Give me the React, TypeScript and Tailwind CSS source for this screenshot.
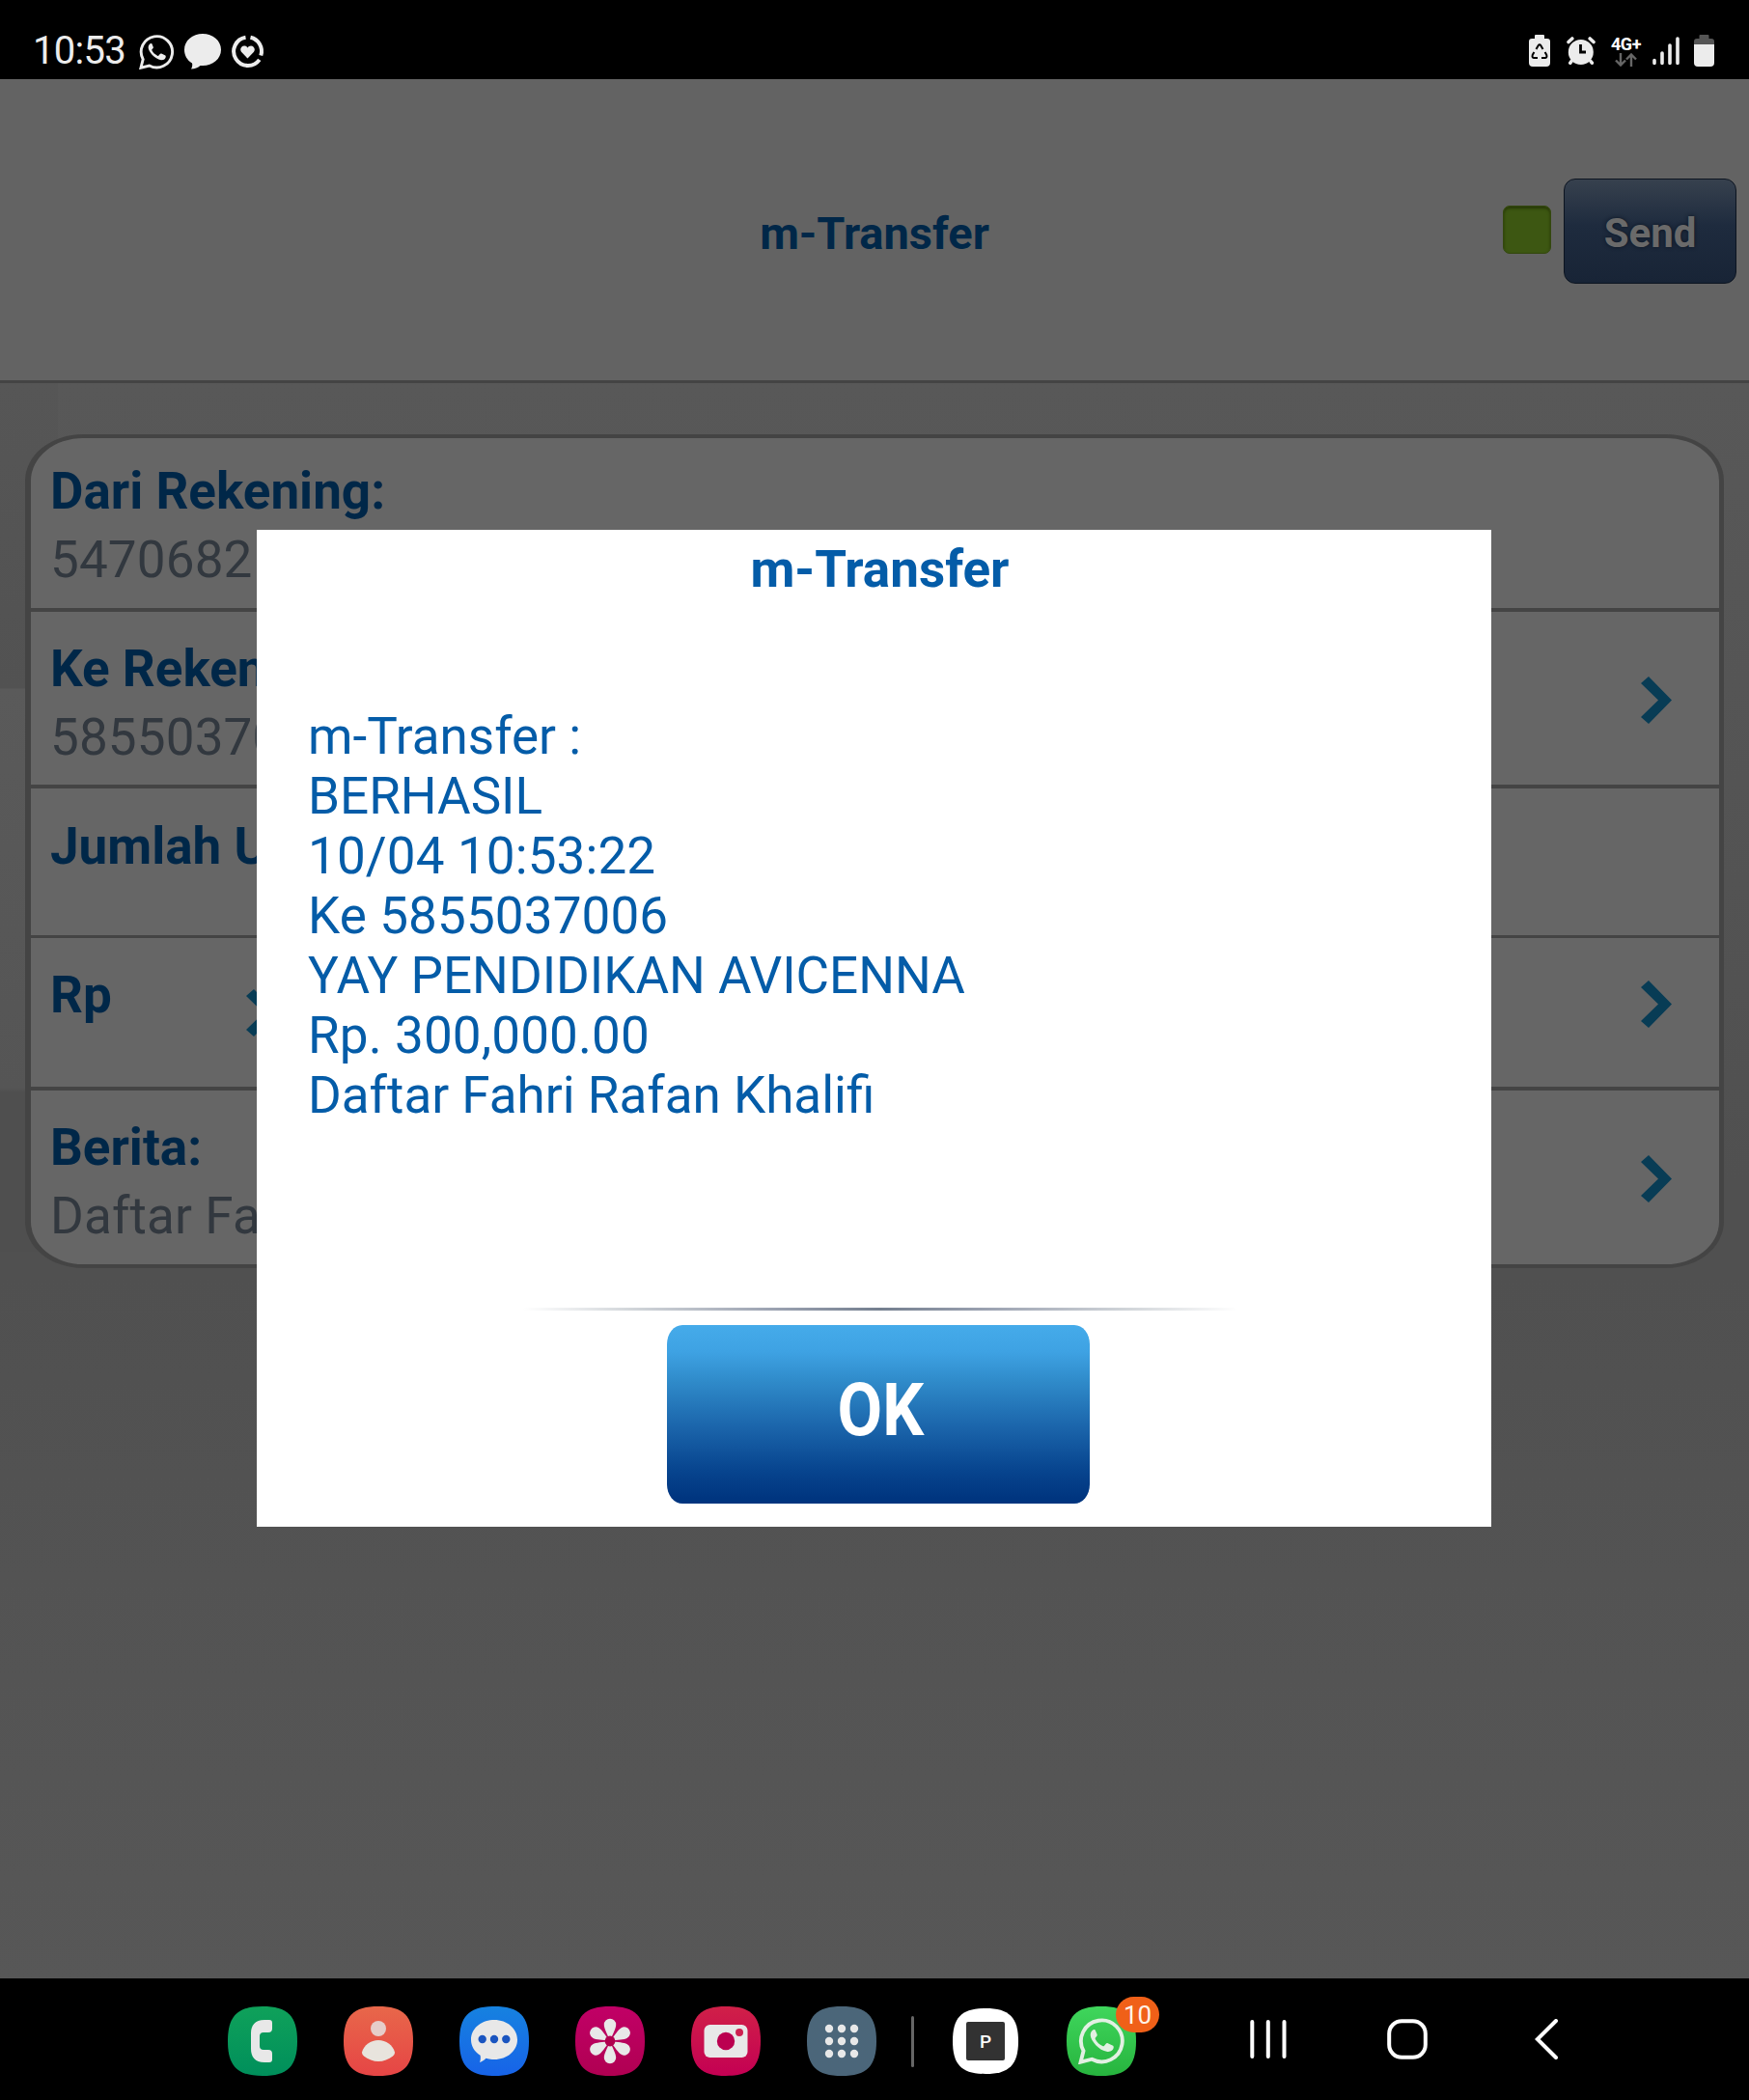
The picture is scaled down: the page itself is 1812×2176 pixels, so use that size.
import React from "react";

const SQUIRCLE = "M36 0C62 0 72 10 72 36C72 62 62 72 36 72C10 72 0 62 0 36C0 10 10 0 36 0Z";

function WhatsApp({ className, stroke }: { className: string; stroke: string }) {
  return (
    <svg className={className} viewBox="0 0 38 38" fill="none">
      <path
        d="M2 36.2L4.3 27.2A16.6 16.6 0 1 1 11 33.9Z"
        stroke={stroke}
        strokeWidth="3"
        strokeLinejoin="miter"
      />
      <path
        d="M13.2 10.2c-1.2-.3-3.6 1.6-3.3 4.8.4 4 6.6 12.2 13.6 12.9 3 .3 5-1.800 5-3.600 0-.8-.2-1-.9-1.400l-3.700-1.800c-.7-.3-1.100-.2-1.600.4l-1.300 1.600c-.4.5-.8.5-1.400.2-2.500-1.200-4.500-3-5.800-5.500-.3-.5-.2-.9.2-1.300l1-1.200c.3-.4.4-.8.2-1.300l-1.500-3.600c-.1-.2-.3-.2-.5-.2Z"
        fill={stroke}
      />
    </svg>
  );
}

function StatusBar() {
  return (
    <div className="flex h-[82px] shrink-0 items-start justify-between bg-black pl-[34px] pr-[36px] text-[#ececec]">
      <div className="flex pt-[29px]">
        <span className="w-[110px] text-[40px] leading-[47px] tracking-[-0.7px]">10:53</span>
        <WhatsApp className="mt-[6px] h-[37px] w-[37px]" stroke="#ececec" />
        <svg className="ml-[10px] mt-[6px] h-[37px] w-[38px]" viewBox="0 0 38 37" fill="#ececec">
          <path d="M19 0C29.500 0 38 7 38 16.500S29.500 33 19 33h-2.500c-2.500 2-5.500 3.600-9.500 3.600C8.200 34.500 8.600 32 8 30.500 3 27.500 0 22.500 0 16.500 0 7 8.500 0 19 0Z" />
        </svg>
        <svg className="ml-[10px] mt-[6px] h-[36px] w-[36px]" viewBox="0 0 36 36" fill="none" stroke="#ececec" strokeWidth="4">
          <path d="M15.500 3.700A14.700 14.700 0 1 0 29.800 26.800" />
          <path d="M20.500 3.700A14.700 14.700 0 0 1 31.300 22.500" />
          <path
            d="M17.500 25.500L11 18.800C9 16 11 12.400 14 12.400c1.600 0 2.800.8 3.500 2 .7-1.200 1.900-2 3.500-2 3 0 5 3.600 3 6.400Z"
            fill="#ececec"
            stroke="none"
          />
        </svg>
      </div>
      <div className="flex pt-[36px]">
        <svg className="h-[33px] w-[22px]" viewBox="0 0 22 33">
          <path d="M7 0h8a1 1 0 0 1 1 1v3h3a3 3 0 0 1 3 3v22a4 4 0 0 1-4 4H4a4 4 0 0 1-4-4V7a3 3 0 0 1 3-3h3V1a1 1 0 0 1 1-1Z" fill="#ececec" />
          <path d="M7.500 15L9.600 11.200q1.400-2 2.800 0L14.500 15M16.600 18l1.700 3q.8 2.800-1.800 3H13M9 24H5.500q-2.600-.2-1.800-3l1.700-3" fill="none" stroke="#000" strokeWidth="2" />
        </svg>
        <svg className="ml-[17px] mt-[1px] h-[31px] w-[30px]" viewBox="0 0 30 31" fill="none" stroke="#ececec" strokeWidth="3.600" strokeLinecap="round">
          <circle cx="14.800" cy="17" r="13" fill="#ececec" stroke="none" />
          <path d="M2 6.500L5.800 3M28 6.500L24.200 3M5 26.500L3.800 28.200M25 26.500l1.300 1.700" />
          <path d="M14.500 9v8H20" stroke="#000" strokeWidth="2.800" strokeLinecap="butt" />
        </svg>
        <div className="ml-[15px] flex w-[33px] flex-col items-center">
          <span className="text-[18px] font-bold leading-[19px] tracking-[-0.5px] text-white">4G+</span>
          <svg className="h-[14px] w-[23px]" viewBox="0 0 23 14" fill="none" stroke="#666" strokeWidth="2.400">
            <path d="M6 0v12M1 7.500L6 12.500 11 7.500M17 14V1.500M12 6.500L17 1.500 22 6.500" />
          </svg>
        </div>
        <svg className="ml-[11px] mt-[2px] h-[30px] w-[28px]" viewBox="0 0 28 30" stroke="#ececec" strokeWidth="3.600" strokeLinecap="round">
          <path d="M2 24.500v3M10 17v10.500M18 9v18.500M26 2v25.500" />
        </svg>
        <svg className="ml-[15px] h-[33px] w-[21px]" viewBox="0 0 21 33">
          <path d="M6.500 0h8a1 1 0 0 1 1 1v3H18a3 3 0 0 1 3 3v3H0V7a3 3 0 0 1 3-3h2.500V1a1 1 0 0 1 1-1Z" fill="#555" />
          <path d="M0 10h21v19a4 4 0 0 1-4 4H4a4 4 0 0 1-4-4Z" fill="#ececec" />
        </svg>
      </div>
    </div>
  );
}

function Header() {
  return (
    <div className="grid h-[315px] shrink-0 grid-cols-[1fr_auto_1fr] border-b-[3px] border-[#444] bg-[#636363]">
      <div />
      <h1 className="pt-[132px] text-[47px] font-bold leading-[56px] text-[#002748]">m-Transfer</h1>
      <div className="flex justify-end pr-[13px]">
        <div className="mr-[13px] mt-[131px] h-[50px] w-[50px] rounded-[7px] border border-[#34480f] bg-[#3d5712] shadow-[inset_0_2px_3px_#263707]" />
        <button className="mt-[103px] flex h-[109px] w-[179px] items-center justify-center rounded-[12px] border border-[#0c1420] bg-linear-to-b from-[#37414e] via-[#1e2b3e] via-45% to-[#182436] pt-[4px] text-[42px] font-bold text-[#6a6a6a] [text-shadow:0_0_4px_#0c1420]">
          Send
        </button>
      </div>
    </div>
  );
}

function Chevron({ className }: { className: string }) {
  return (
    <svg className={className} viewBox="0 0 32 49" fill="#083c55">
      <path d="M8 0L32 24.500 8 49 0 42 18 24.500 0 7Z" />
    </svg>
  );
}

function Row({ label, value, className, chevron }: { label: string; value?: string; className: string; chevron?: string }) {
  return (
    <div className={"flex items-start justify-between overflow-hidden pl-[20px] pr-[49px] text-[53px] leading-[70px] " + className}>
      <div className="flex flex-col">
        <span className="font-bold text-[#002748]">{label}</span>
        {value && <span className="pt-px tracking-[0.15px] text-[#32383f]">{value}</span>}
      </div>
      {chevron && <Chevron className={"h-[49px] w-[32px] " + chevron} />}
    </div>
  );
}

function Form() {
  return (
    <div className="ml-[26px] mt-[53px] h-[864px] w-[1760px] overflow-hidden rounded-[60px/48px] border-4 border-l-[6px] border-r-[5px] border-[#444] bg-[#666]">
      <Row label="Dari Rekening:" value="5470682" className="h-[180px] border-b-4 border-[#444] pt-[20px]" />
      <Row label="Ke Rekening:" value="5855037006" className="h-[183px] border-b-4 border-[#444] pt-[24px]" chevron="mt-[43px]" />
      <Row label="Jumlah Uang:" className="h-[155px] border-b-[3px] border-[#444] pt-[25px]" />
      <div className="flex h-[158px] items-start border-b-4 border-[#444] pl-[20px] pr-[49px] pt-[24px] text-[53px] font-bold leading-[70px] text-[#002748]">
        <span className="w-[203px]">Rp</span>
        <Chevron className="mt-[29px] h-[49px] w-[32px]" />
        <Chevron className="ml-auto mt-[20px] h-[49px] w-[32px]" />
      </div>
      <Row label="Berita:" value="Daftar Fahri" className="h-[179px] pt-[24px]" chevron="mt-[43px]" />
    </div>
  );
}

const LINES = [
  "m-Transfer :",
  "BERHASIL",
  "10/04 10:53:22",
  "Ke 5855037006",
  "YAY PENDIDIKAN AVICENNA",
  "Rp. 300,000.00",
  "Daftar Fahri Rafan Khalifi",
];

function Dialog() {
  return (
    <div className="absolute left-[266px] top-[549px] flex h-[1033px] w-[1279px] flex-col bg-white text-[53px] leading-[62px] text-[#045ca8]">
      <h2 className="pl-[12px] pt-[10px] text-center font-bold">m-Transfer</h2>
      <div className="pl-[53px] pt-[111px]">
        {LINES.map((l) => (
          <p key={l} className={/\d/.test(l) ? "tracking-[0.12px]" : ""}>
            {l}
          </p>
        ))}
      </div>
      <div className="ml-[276px] mt-[189px] h-[3px] w-[740px] shrink-0 bg-[linear-gradient(90deg,#fff,#d2d6da_15%,#9ba2b1_35%,#747f8f_50%,#9ba2b1_65%,#d2d6da_85%,#fff)]" />
      <button className="ml-[425px] mt-[15px] flex h-[185px] w-[438px] shrink-0 items-center justify-center rounded-[16px/20px] bg-[linear-gradient(#45abea,#3ea2e3_15%,#2f8ac9_32%,#1b65ab_57%,#084690_80%,#00357f_97%)] pb-[10px] pl-[5px] text-[76px] font-bold text-white">
        <span className="scale-x-[0.89]">OK</span>
      </button>
    </div>
  );
}

function Tile({ from, to, className, children }: { from: string; to: string; className: string; children?: React.ReactNode }) {
  const id = "tile" + from.slice(1);
  return (
    <svg className={"h-[72px] w-[72px] shrink-0 " + className} viewBox="0 0 72 72">
      <defs>
        <linearGradient id={id} x1="0" y1="0" x2="0" y2="1">
          <stop stopColor={from} />
          <stop offset="1" stopColor={to} />
        </linearGradient>
      </defs>
      <path d={SQUIRCLE} fill={"url(#" + id + ")"} />
      {children}
    </svg>
  );
}

const PETALS = [0, 60, 120, 180, 240, 300];
const DOTS = [23, 36, 49];

function NavBar() {
  return (
    <div className="flex h-[126px] shrink-0 items-start bg-black pl-[236px] pt-[29px]">
      <Tile from="#0fa15a" to="#008f5b" className="mr-[48px]">
        <path d="M38 14h5q3 0 3 3v6q0 4-4 4h-5q-4 0-4 4v10q0 4 4 4h5q4 0 4 4v6q0 3-3 3h-5C28 58 24 52 24 44V28c0-8 4-14 14-14Z" fill="#e8e8e8" />
      </Tile>
      <Tile from="#e8674a" to="#e64545" className="mr-[48px]">
        <circle cx="36" cy="23" r="8" fill="#e6cdc9" />
        <path d="M36 35c8 0 15 5 17 12.500 0 2-1 3-2 4C47 55 41 57 36 57s-11-2-15-5.500c-1-1-2-2-2-4C21 40 28 35 36 35Z" fill="#e8e4dd" />
      </Tile>
      <Tile from="#1682e0" to="#1763e8" className="mr-[48px]">
        <path d="M36 14c13.500 0 24 9 24 20.500S49.500 55 36 55c-3 0-6-.5-8.500-1.200-2 2-4 3.500-6.500 4.200 1-2.500 1-5 .6-7.200C15.500 47 12 41 12 34.500 12 23 22.500 14 36 14Z" fill="#e8e8e8" />
        <g fill="#1a55c0">
          <circle cx="23.700" cy="34" r="4.200" />
          <circle cx="36" cy="34" r="4.200" />
          <circle cx="48.300" cy="34" r="4.200" />
        </g>
      </Tile>
      <Tile from="#c10066" to="#b00052" className="mr-[48px]">
        <g fill="#e8e8e8">
          {PETALS.map((a) => (
            <path key={a} d="M36 36C33 28 29.800 23 29.800 19a6.200 6.200 0 0 1 12.400 0C42.200 23 39 28 36 36Z" transform={"rotate(" + a + " 36 36)"} />
          ))}
        </g>
        <circle cx="36" cy="36" r="5.400" fill="#b0004f" />
      </Tile>
      <Tile from="#d02048" to="#c40053" className="mr-[48px]">
        <rect x="13.500" y="19" width="45" height="34" rx="6" fill="#e8e8e8" />
        <circle cx="36" cy="36" r="9.200" fill="#bb0050" />
        <circle cx="50" cy="27" r="4" fill="#cd2050" />
      </Tile>
      <Tile from="#4b6679" to="#4b667a" className="mr-[36px]">
        <g fill="#e8e8e8">
          {DOTS.map((y) => DOTS.map((x) => <circle key={x + "-" + y} cx={x} cy={y} r="4.200" />))}
        </g>
      </Tile>
      <div className="mr-[40px] mt-[10px] h-[53px] w-[3px] rounded-full bg-[#666]" />
      <div className="relative mr-[50px] mt-[2px] h-[68px] w-[68px]">
        <svg className="h-full w-full" viewBox="0 0 72 72">
          <path d={SQUIRCLE} fill="#fff" />
        </svg>
        <div className="absolute left-[14px] top-[14px] flex h-[40px] w-[40px] items-center justify-center rounded-[2px] bg-[#323232] text-[19px] font-medium leading-none text-white">
          P
        </div>
      </div>
      <div className="relative h-[72px] w-[72px]">
        <Tile from="#3fd65c" to="#27b43e" className="" />
        <WhatsApp className="absolute left-[12px] top-[11px] h-[49px] w-[49px]" stroke="#e2f0e3" />
        <span className="absolute -top-[10px] left-[51px] flex h-[37px] w-[45px] items-center justify-center rounded-full bg-[#f06018] text-[26px] leading-none text-[#fff3e8]">
          10
        </span>
      </div>
      <svg className="ml-[118px] mt-[14px] h-[40px] w-[38px]" viewBox="0 0 38 40" stroke="#fff" strokeWidth="4" strokeLinecap="round">
        <path d="M2.300 2v36M18.800 2v36M35.500 2v36" />
      </svg>
      <svg className="ml-[104px] mt-[13px] h-[42px] w-[42px]" viewBox="0 0 42 42" fill="none" stroke="#fff" strokeWidth="4">
        <rect x="2.200" y="2.200" width="37.600" height="37.600" rx="13" />
      </svg>
      <svg className="ml-[111px] mt-[13px] h-[42px] w-[24px]" viewBox="0 0 24 42" fill="none" stroke="#fff" strokeWidth="4" strokeLinecap="round">
        <path d="M22 2L2.800 21 22 40" />
      </svg>
    </div>
  );
}

export default function App() {
  return (
    <div className="relative flex h-[2176px] w-[1812px] flex-col overflow-hidden bg-black font-[Roboto,sans-serif]">
      <StatusBar />
      <Header />
      <div className="min-h-0 flex-1 overflow-hidden bg-[linear-gradient(#565656,#525252_316px,#5a5a5a_317px,#555_730px,#4f4f4f_735px,#4f4f4f_900px),linear-gradient(#585858,#505050_50%,#505050_56%,#575757)] bg-[length:60px_900px,100%_100%] bg-no-repeat">
        <Form />
      </div>
      <NavBar />
      <Dialog />
    </div>
  );
}
